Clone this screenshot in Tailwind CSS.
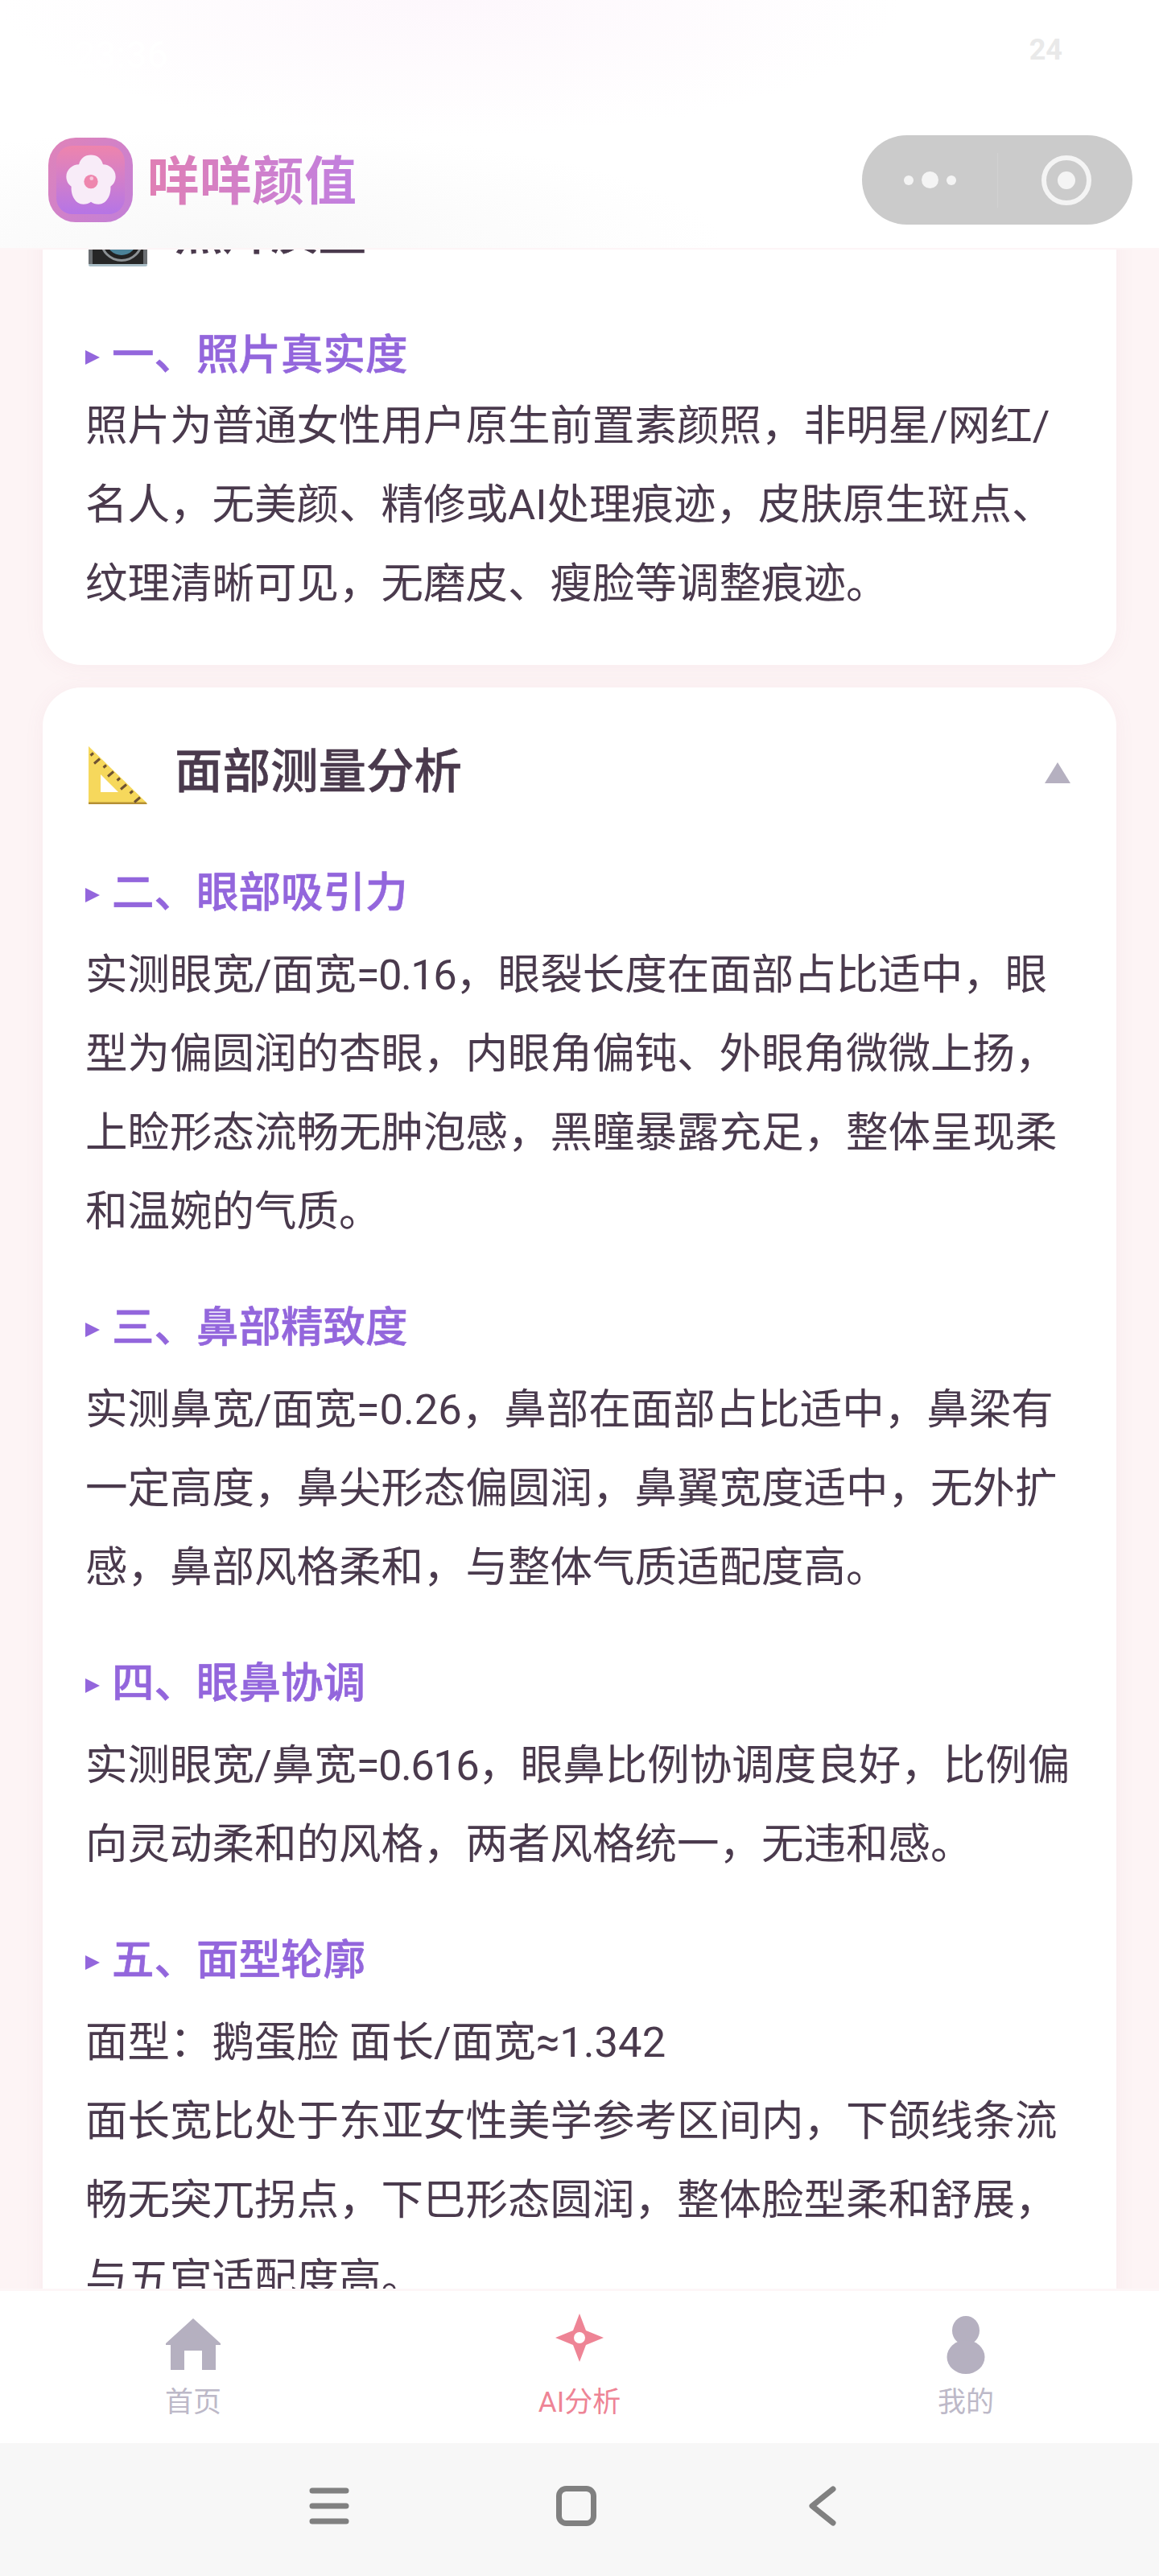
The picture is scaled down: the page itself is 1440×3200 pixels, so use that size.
<!DOCTYPE html>
<html lang="zh-CN">
	<head>
		<meta charset="UTF-8" />
		<meta name="viewport" content="width=device-width, initial-scale=1" />
		<title>咩咩颜值</title>
		<script src="https://cdn.jsdelivr.net/npm/@tailwindcss/browser@4"></script>
	</head>
	<body class="bg-white">
		<div class="w-[1440px] h-[3200px] flex flex-col overflow-hidden font-['Roboto','Noto_Sans_CJK_SC',sans-serif] text-[#4a3a4d]">
			<!-- status bar + title bar -->
			<header class="h-[310px] shrink-0 flex flex-col border-b-[2px] border-[#fdf5f6] bg-white bg-[radial-gradient(ellipse_560px_170px_at_560px_0px,#fdf7fc,transparent),radial-gradient(ellipse_620px_150px_at_280px_310px,#f8f8f8,transparent)]">
				<div class="h-[168px] shrink-0 flex items-start justify-between pl-[92px] pr-[120px] pt-[34px]">
					<span class="text-[46px] font-medium text-white">23:36</span>
					<span class="text-[36px] leading-[56px] font-bold text-[#e9e9e9]">24</span>
				</div>
				<div class="flex items-start justify-between pl-[60px] pr-[33px]">
					<div class="flex items-center gap-[18px] pt-[3px]">
						<div class="w-[105px] h-[105px] rounded-[34px] bg-linear-to-br from-[#e083b8] to-[#c27fd8] flex items-center justify-center">
							<div class="w-[85px] h-[85px] rounded-[20px] bg-linear-to-b from-[#ee84ac] to-[#b574e6] flex items-center justify-center">
								<svg width="66" height="66" viewBox="0 0 84 84">
									<path fill="#f8ecf8" d="M42 2c10 0 17 6 19 15 10 0 20 8 20 19 0 7-3 12-8 16 1 13-6 28-19 28-5 0-9-2-12-4-3 2-7 4-12 4C17 80 10 65 11 52 6 48 3 43 3 36c0-11 10-19 20-19C25 8 32 2 42 2z" />
									<circle cx="42" cy="44" r="11" fill="#ee86ae" />
									<circle cx="43" cy="39" r="3" fill="#f8c6da" />
								</svg>
							</div>
						</div>
						<span class="mt-[4px] text-[65px] leading-[100px] font-bold text-transparent bg-clip-text bg-linear-to-r from-[#e07fb4] to-[#c17fe0]">咩咩颜值</span>
					</div>
					<div class="w-[336px] h-[111px] rounded-full bg-[#cbcbcb] flex items-center">
						<div class="w-[168px] flex items-center justify-end gap-[10px] pr-[51px]">
							<span class="w-[12px] h-[12px] rounded-full bg-[#f4f4f4]"></span>
							<span class="w-[21px] h-[21px] rounded-full bg-[#f4f4f4]"></span>
							<span class="w-[12px] h-[12px] rounded-full bg-[#f4f4f4]"></span>
						</div>
						<div class="w-[1px] h-[68px] bg-[#d2d2d2]"></div>
						<div class="flex-1 flex items-center justify-center pl-[3px]">
							<svg width="62" height="62" viewBox="0 0 62 62">
								<circle cx="31" cy="31" r="28" fill="none" stroke="#f4f4f4" stroke-width="6" />
								<circle cx="31" cy="31" r="11" fill="#f4f4f4" />
							</svg>
						</div>
					</div>
				</div>
			</header>

			<!-- scrolled content -->
			<main class="h-[2533px] shrink-0 overflow-hidden bg-[#fdf4f5] px-[53px]">
				<div class="flex flex-col gap-[28px] -mt-[125px]">
					<section class="bg-white rounded-[48px] px-[53px] pb-[52px] shadow-[0_2px_24px_rgba(180,120,140,0.07)]">
						<div class="h-[204px] mb-[14px] flex items-center gap-[34px]">
							<svg class="shrink-0 ml-[4px] mt-[14px]" width="73" height="73" viewBox="0 0 73 73">
								<rect x="0" y="69" width="73" height="4" rx="2" fill="#a9bec7" />
								<rect x="0" y="8" width="73" height="62" fill="#6a6e71" />
								<rect x="5" y="8" width="63" height="62" fill="#262626" />
								<circle cx="41" cy="40" r="27" fill="#8d9295" />
								<circle cx="41" cy="40" r="24" fill="#222" />
								<circle cx="41" cy="40" r="19" fill="#4b8298" />
								<circle cx="41" cy="36" r="9" fill="#2a5a70" />
							</svg>
							<h2 class="mt-[8px] text-[59.5px] font-medium [-webkit-text-stroke:0.5px_#4a3a4d]">照片质量</h2>
						</div>
						<h3 class="h-[72px] flex items-center gap-[15px] mb-[5px] text-[52.5px] font-medium text-[#9366dc] [-webkit-text-stroke:0.6px_#9366dc]">
							<svg class="shrink-0 mt-[10px]" width="18" height="18" viewBox="0 0 18 18"><path fill="#9366dc" d="M0 0l18 9-18 9z" /></svg>
							<span class="mt-[4px]">一、照片真实度</span>
						</h3>
						<p class="text-[52.5px] leading-[98px]">照片为普通女性用户原生前置素颜照，非明星/网红/名人，无美颜、精修或AI处理痕迹，皮肤原生斑点、纹理清晰可见，无磨皮、瘦脸等调整痕迹。</p>
					</section>

					<section class="bg-white rounded-[48px] px-[53px] pb-[53px] shadow-[0_2px_24px_rgba(180,120,140,0.07)]">
						<div class="h-[204px] mb-[13px] flex items-center gap-[34px]">
							<svg class="shrink-0 ml-[4px] mt-[13px]" width="73" height="72" viewBox="0 0 73 72">
								<path fill="#f6d85c" fill-rule="evenodd" d="M0 0l73 71H0zM15 35v22h22z" />
								<path fill="#b58f34" d="M0 69.500h71l2 2.500H0z" />
								<path stroke="#6e5233" stroke-width="3" fill="none" d="M6 8.500l-3.500 3M14 15.500l-7 6M22 23.500l-3.500 3M31 31.500l-7 6M39 39.500l-3.500 3M47 47.500l-7 6M55 55.500l-3.500 3M64 63.500l-7 6" />
							</svg>
							<h2 class="mt-[8px] text-[59.5px] font-medium flex-1 [-webkit-text-stroke:0.5px_#4a3a4d]">面部测量分析</h2>
							<svg class="shrink-0 mr-[4px] mt-[8px]" width="32" height="26" viewBox="0 0 32 26"><path fill="#b5b0c0" d="M16 0l16 26H0z" /></svg>
						</div>
						<h3 class="h-[72px] flex items-center gap-[15px] mb-[19px] text-[52.5px] font-medium text-[#9366dc] [-webkit-text-stroke:0.6px_#9366dc]">
							<svg class="shrink-0 mt-[10px]" width="18" height="18" viewBox="0 0 18 18"><path fill="#9366dc" d="M0 0l18 9-18 9z" /></svg>
							<span class="mt-[4px]">二、眼部吸引力</span>
						</h3>
						<p class="text-[52.5px] leading-[98px] mb-[57px]">实测眼宽/面宽<span class="tracking-[-1.5px]">=0.16</span>，眼裂长度在面部占比适中，眼型为偏圆润的杏眼，内眼角偏钝、外眼角微微上扬，上睑形态流畅无肿泡感，黑瞳暴露充足，整体呈现柔和温婉的气质。</p>
						<h3 class="h-[72px] flex items-center gap-[15px] mb-[19px] text-[52.5px] font-medium text-[#9366dc] [-webkit-text-stroke:0.6px_#9366dc]">
							<svg class="shrink-0 mt-[10px]" width="18" height="18" viewBox="0 0 18 18"><path fill="#9366dc" d="M0 0l18 9-18 9z" /></svg>
							<span class="mt-[4px]">三、鼻部精致度</span>
						</h3>
						<p class="text-[52.5px] leading-[98px] mb-[57px]">实测鼻宽/面宽=0.26，鼻部在面部占比适中，鼻梁有一定高度，鼻尖形态偏圆润，鼻翼宽度适中，无外扩感，鼻部风格柔和，与整体气质适配度高。</p>
						<h3 class="h-[72px] flex items-center gap-[15px] mb-[19px] text-[52.5px] font-medium text-[#9366dc] [-webkit-text-stroke:0.6px_#9366dc]">
							<svg class="shrink-0 mt-[10px]" width="18" height="18" viewBox="0 0 18 18"><path fill="#9366dc" d="M0 0l18 9-18 9z" /></svg>
							<span class="mt-[4px]">四、眼鼻协调</span>
						</h3>
						<p class="text-[52.5px] leading-[98px] mb-[57px]">实测眼宽/鼻宽<span class="tracking-[-1.5px]">=0.616</span>，眼鼻比例协调度良好，比例偏向灵动柔和的风格，两者风格统一，无违和感。</p>
						<h3 class="h-[72px] flex items-center gap-[15px] mb-[19px] text-[52.5px] font-medium text-[#9366dc] [-webkit-text-stroke:0.6px_#9366dc]">
							<svg class="shrink-0 mt-[10px]" width="18" height="18" viewBox="0 0 18 18"><path fill="#9366dc" d="M0 0l18 9-18 9z" /></svg>
							<span class="mt-[4px]">五、面型轮廓</span>
						</h3>
						<p class="text-[52.5px] leading-[98px]">面型：鹅蛋脸 面长/面宽≈1.342<br />面长宽比处于东亚女性美学参考区间内，下颌线条流畅无突兀拐点，下巴形态圆润，整体脸型柔和舒展，与五官适配度高。</p>
					</section>
				</div>
			</main>

			<!-- tab bar -->
			<nav class="h-[192px] shrink-0 bg-white border-t-[3px] border-[#fdf6f7] grid grid-cols-3 text-[35px] text-[#bdb9c8]">
				<div class="flex flex-col items-center pt-[34px]">
					<svg width="68" height="65" viewBox="0 0 68 65"><path fill="#b5b0c0" d="M34 0L68 31V33H62V64H45V40H23V64H6V33H0V31Z" /></svg>
					<span class="mt-[18px] leading-[44px]">首页</span>
				</div>
				<div class="flex flex-col items-center pt-[28px] text-[#ee8495]">
					<svg width="60" height="60" viewBox="0 0 60 60"><path fill="#ee8495" fill-rule="evenodd" d="M30 0l8 21 22 9-22 9-8 21-8-21L0 30l22-9zM30 23a7 7 0 1 0 0 14 7 7 0 0 0 0-14z" /></svg>
					<span class="mt-[29px] leading-[44px]">AI分析</span>
				</div>
				<div class="flex flex-col items-center pt-[31px]">
					<svg width="48" height="72" viewBox="0 0 48 72"><ellipse cx="24" cy="18" rx="17" ry="18" fill="#b5b0c0" /><ellipse cx="24" cy="51" rx="23.500" ry="21" fill="#b5b0c0" /></svg>
					<span class="mt-[14px] leading-[44px]">我的</span>
				</div>
			</nav>

			<!-- android nav -->
			<div class="flex-1 bg-[#f7f7f7] flex items-start pt-[53px] pl-[384px]">
				<svg width="50" height="50" viewBox="0 0 50 50"><path stroke="#808080" stroke-width="7" stroke-linecap="round" d="M4 6h42M4 25h42M4 44h42" /></svg>
				<svg class="ml-[257px]" width="50" height="50" viewBox="0 0 50 50"><rect x="3.500" y="3.500" width="43" height="43" rx="9" fill="none" stroke="#808080" stroke-width="7" /></svg>
				<svg class="ml-[264px]" width="34" height="50" viewBox="0 0 34 50"><path stroke="#808080" stroke-width="7" stroke-linecap="round" stroke-linejoin="round" fill="none" d="M30 4L4 25l26 21" /></svg>
			</div>
		</div>
	</body>
</html>
